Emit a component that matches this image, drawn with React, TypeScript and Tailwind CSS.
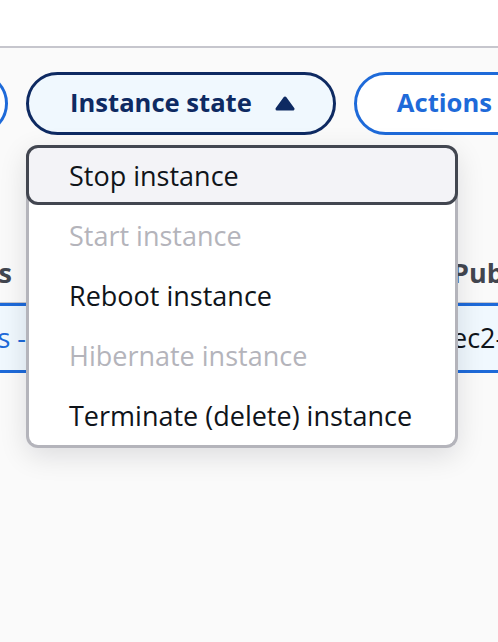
import { useState } from "react";

const items = [
  { label: "Stop instance", disabled: false },
  { label: "Start instance", disabled: true },
  { label: "Reboot instance", disabled: false },
  { label: "Hibernate instance", disabled: true },
  { label: "Terminate (delete) instance", disabled: false },
];

function CaretUp() {
  return (
    <svg width="20" height="15" viewBox="0 0 20 15" className="shrink-0">
      <path
        d="M10 2 L18 13 L2 13 Z"
        fill="#0e2a62"
        stroke="#0e2a62"
        strokeWidth="3"
        strokeLinejoin="round"
      />
    </svg>
  );
}

export default function App() {
  const [active] = useState(0);

  return (
    <div className="w-[498px] h-[642px] overflow-hidden bg-[#fafafa] font-['Open_Sans',sans-serif] text-[27px]">
      <div className="h-[48px] bg-white border-b-2 border-[#c6c6cd]" />

      <div className="relative">
        {/* toolbar */}
        <div className="flex gap-[18px] pt-[24px] whitespace-nowrap text-[25.6px]">
          <button className="shrink-0 w-[100px] -ml-[92px] h-[63px] rounded-full border-[3px] border-[#1e6ad9] bg-white" />
          <button className="shrink-0 h-[63px] flex items-center rounded-full border-[3px] border-[#0e2a62] bg-[#f0f8fe] pl-[41px] pr-[38px] gap-[23px] font-bold text-[#0e2a62]">
            <span>Instance state</span>
            <CaretUp />
          </button>
          <button className="shrink-0 h-[63px] flex items-center rounded-full border-[3px] border-[#1e6ad9] bg-white pl-[40px] pr-[40px] font-bold text-[#1e6ad9]">
            Actions
          </button>
        </div>

        {/* table behind the menu */}
        <div className="mt-[110px]">
          <div className="grid grid-cols-[30px_1fr_46px] h-[58px] items-center border-b border-[#c6c6cd] font-bold text-[#424650] whitespace-nowrap">
            <div className="overflow-hidden flex justify-end pr-[18px]">Instances</div>
            <div />
            <div className="overflow-hidden">Public IPv4 DNS</div>
          </div>
          <div className="grid grid-cols-[30px_1fr_46px] h-[70px] items-center border-y-[3px] border-[#1e6ad9] bg-[#f0f8fe] whitespace-nowrap">
            <div className="overflow-hidden flex justify-end pr-[4px] text-[#1e6ad9]">Instances -</div>
            <div />
            <div className="overflow-hidden text-[#0f141a]">ec2-3-85-12-104</div>
          </div>
        </div>

        {/* dropdown menu */}
        <div className="absolute left-[26px] top-[97px] w-[432px] z-10 bg-white rounded-[12px] border-[3px] border-t-0 border-[#b4b4bb] shadow-[0_8px_28px_rgba(0,7,22,0.12)]">
          {items.map((item, i) =>
            i === active ? (
              <div
                key={item.label}
                className="-mx-[3px] h-[60px] pt-[3px] flex items-center pl-[40px] rounded-[12px] border-[3px] border-[#424650] bg-[#f3f3f7] text-[#0f141a]"
              >
                {item.label}
              </div>
            ) : (
              <div
                key={item.label}
                className={`h-[60px] pt-[3px] flex items-center pl-[40px] ${
                  item.disabled ? "text-[#b4b4bb]" : "text-[#0f141a]"
                }`}
              >
                {item.label}
              </div>
            )
          )}
        </div>
      </div>
    </div>
  );
}
